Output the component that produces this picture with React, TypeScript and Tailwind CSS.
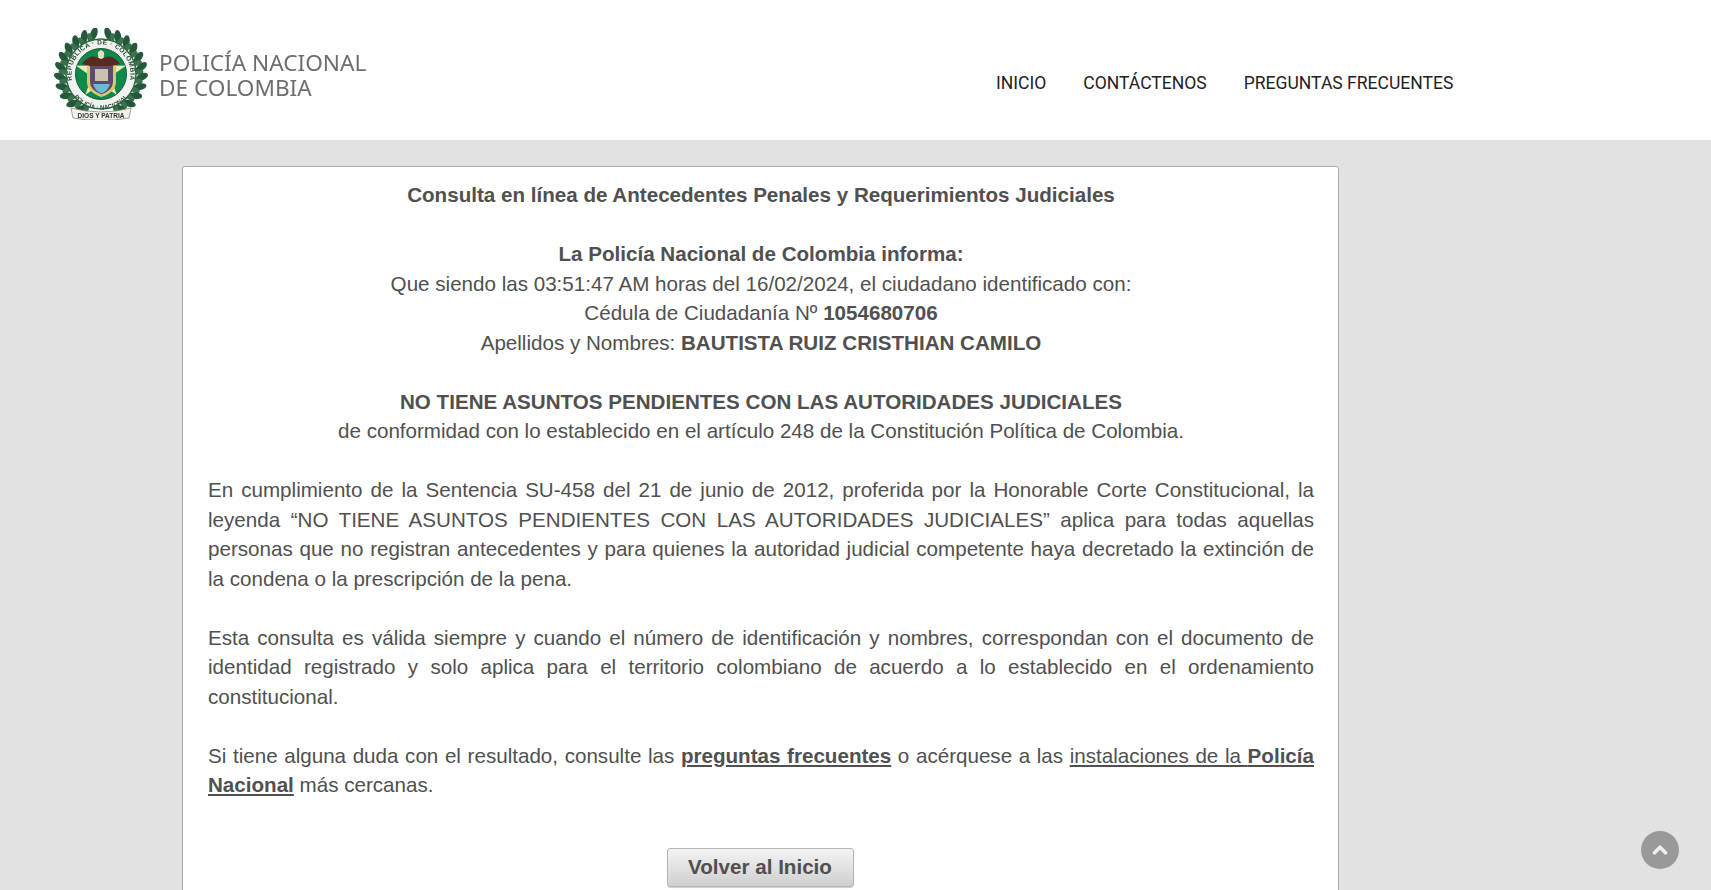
import React from 'react';
import { ChevronUp } from 'lucide-react';

const leafAngles = [10, 24, 38, 52, 66, 80, 94, 108, 122, 136, 150];

const Emblem: React.FC = () => (
    <svg width="94" height="92" viewBox="0 0 94 92" className="shrink-0 [filter:blur(0.5px)]">
        <defs>
            <path id="ringTop" d="M 21.5 60.75 A 29.5 29.5 0 1 1 72.5 60.75" />
            <path id="ringBottom" d="M 16.3 63.75 A 35.5 35.5 0 0 0 77.7 63.75" />
        </defs>
        {/* wreath */}
        {leafAngles.map((a) => (
            <g key={a}>
                <ellipse cx="47" cy="5" rx="3.4" ry="6.5" fill="#25583a" transform={`rotate(${a} 47 46) rotate(-28 47 5)`} />
                <ellipse cx="47" cy="5" rx="3.4" ry="6.5" fill="#25583a" transform={`rotate(${-a} 47 46) rotate(28 47 5)`} />
                <ellipse cx="47" cy="8.5" rx="2.6" ry="5" fill="#3a7350" transform={`rotate(${a + 7} 47 46)`} />
                <ellipse cx="47" cy="8.5" rx="2.6" ry="5" fill="#3a7350" transform={`rotate(${-a - 7} 47 46)`} />
            </g>
        ))}
        <circle cx="47" cy="46" r="35" fill="#eef1ee" stroke="#2a6a40" strokeWidth="1.5" />
        <text fontSize="6.6" fontWeight="700" fill="#2c4a34" fontFamily="Liberation Sans, sans-serif" letterSpacing="0.4">
            <textPath href="#ringTop" startOffset="50%" textAnchor="middle">REPÚBLICA · DE · COLOMBIA</textPath>
        </text>
        <text fontSize="6" fontWeight="700" fill="#2c4a34" fontFamily="Liberation Sans, sans-serif">
            <textPath href="#ringBottom" startOffset="50%" textAnchor="middle">POLICÍA · NACIONAL</textPath>
        </text>
        <circle cx="47" cy="46" r="25.5" fill="#0e8a4c" stroke="#1d5a35" strokeWidth="1" />
        {/* star */}
        <polygon points="47,22 52.5,38 71,38 56,48.5 62,66 47,55.5 32,66 38,48.5 23,38 41.5,38" fill="#ecebb0" stroke="#f7f7e2" strokeWidth="0.6" />
        {/* shield */}
        <path d="M33 37 H62 V54 Q62 64 47.5 69 Q33 64 33 54 Z" fill="#d8c96a" />
        <path d="M36 38 H59 V54 Q59 62 47.5 66.5 Q36 62 36 54 Z" fill="#5d4a6c" />
        <rect x="41" y="41" width="13" height="12" fill="#c9c2b0" />
        <path d="M39 56 H56 Q54 63 47.5 65.5 Q41 63 39 56 Z" fill="#6bb8d8" />
        {/* condor */}
        <path d="M28 36 Q36 24 47 31 Q58 24 66 36 L58 38 L36 38 Z" fill="#5a2a22" />
        <circle cx="47" cy="26" r="3.2" fill="#eadcc6" />
        {/* ribbon */}
        <path d="M17 80 Q47 88 77 80 L75 90 Q47 95 19 90 Z" fill="#f3f3ee" stroke="#8a8a84" strokeWidth="0.8" />
        <text x="47" y="90" textAnchor="middle" fontSize="6.5" fontWeight="700" fill="#333333" fontFamily="Liberation Sans, sans-serif">DIOS Y PATRIA</text>
    </svg>
);

const App: React.FC = () => {
    return (
        <div className="relative h-[890px] overflow-hidden bg-[#e2e2e2] font-['Liberation_Sans',Arial,sans-serif] text-[20.6px] leading-[29.5px] text-[#505050]">
            {/* Header */}
            <header className="flex h-[140px] items-center bg-white">
                <div className="flex w-[960px] items-center pl-[54px] pt-[7px]">
                    <Emblem />
                    <div className="ml-[11px] pt-[3px] font-['Noto_Sans',sans-serif] text-[22.6px] leading-[25px] text-[#6e6e6e] [filter:blur(0.3px)]">
                        <div>POLICÍA NACIONAL</div>
                        <div>DE COLOMBIA</div>
                    </div>
                </div>
                <nav className="ml-[36px] flex gap-[37px] pt-[28px] font-['Roboto',sans-serif] text-[17.55px] leading-none text-[#222222]">
                    <a>INICIO</a>
                    <a>CONTÁCTENOS</a>
                    <a>PREGUNTAS FRECUENTES</a>
                </nav>
            </header>

            {/* Result panel */}
            <main className="ml-[182px] mt-[26px] w-[1157px] rounded-[3px] border border-[#a9a9a9] bg-white pl-[25px] pr-[24px] pt-[13px] pb-[20px]">
                <div className="text-center">
                    <p className="font-bold">Consulta en línea de Antecedentes Penales y Requerimientos Judiciales</p>
                    <p className="mt-[29.5px] font-bold">La Policía Nacional de Colombia informa:</p>
                    <p>Que siendo las 03:51:47 AM horas del 16/02/2024, el ciudadano identificado con:</p>
                    <p>Cédula de Ciudadanía Nº <b>1054680706</b></p>
                    <p>Apellidos y Nombres: <b>BAUTISTA RUIZ CRISTHIAN CAMILO</b></p>
                    <p className="mt-[29.5px] font-bold">NO TIENE ASUNTOS PENDIENTES CON LAS AUTORIDADES JUDICIALES</p>
                    <p>de conformidad con lo establecido en el artículo 248 de la Constitución Política de Colombia.</p>
                </div>
                <p className="mt-[29.5px] text-justify">
                    En cumplimiento de la Sentencia SU-458 del 21 de junio de 2012, proferida por la Honorable Corte Constitucional, la leyenda “NO TIENE ASUNTOS PENDIENTES CON LAS AUTORIDADES JUDICIALES” aplica para todas aquellas personas que no registran antecedentes y para quienes la autoridad judicial competente haya decretado la extinción de la condena o la prescripción de la pena.
                </p>
                <p className="mt-[29.5px] text-justify">
                    Esta consulta es válida siempre y cuando el número de identificación y nombres, correspondan con el documento de identidad registrado y solo aplica para el territorio colombiano de acuerdo a lo establecido en el ordenamiento constitucional.
                </p>
                <p className="mt-[29.5px] text-justify">
                    Si tiene alguna duda con el resultado, consulte las <a className="font-bold underline">preguntas frecuentes</a> o acérquese a las <a className="underline">instalaciones de la <b>Policía Nacional</b></a> más cercanas.
                </p>
                <div className="mt-[48px] flex justify-center pr-[2px]">
                    <button className="h-[39px] w-[187px] rounded-[3px] border border-[#b5b5b5] bg-gradient-to-b from-[#f4f4f4] to-[#cfcfcf] text-[20.6px] font-bold text-[#505050] shadow-[0_1px_1px_rgba(0,0,0,0.2)]">
                        Volver al Inicio
                    </button>
                </div>
            </main>

            {/* Scroll to top */}
            <div className="absolute left-[1641px] top-[831px] flex h-[38px] w-[38px] items-center justify-center rounded-full bg-[#999999] text-[#eeeeee]">
                <ChevronUp size={22} strokeWidth={4} />
            </div>
        </div>
    );
};

export default App;
